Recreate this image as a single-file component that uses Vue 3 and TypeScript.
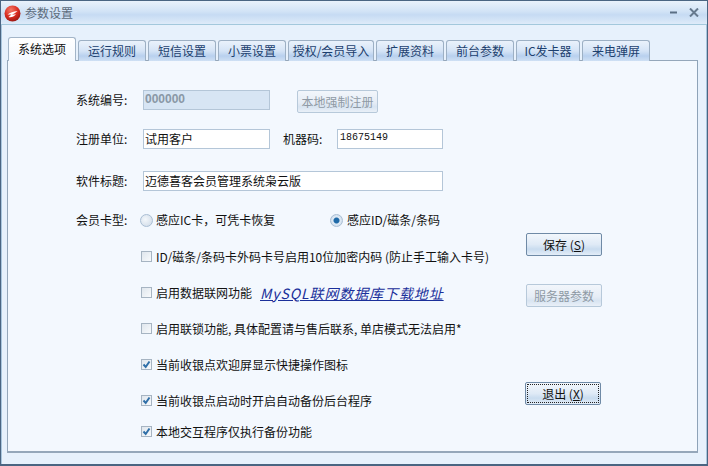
<script setup lang="ts">
const tabs = ['运行规则', '短信设置', '小票设置', '授权/会员导入', '扩展资料', '前台参数', 'IC发卡器', '来电弹屏']
const checks = [
  { text: 'ID/磁条/条码卡外码卡号启用10位加密内码 (防止手工输入卡号)', on: false, gap: 25 },
  { text: '启用数据联网功能', on: false, gap: 25, link: true },
  { text: '启用联锁功能, 具体配置请与售后联系, 单店模式无法启用*', on: false, gap: 25 },
  { text: '当前收银点欢迎屏显示快捷操作图标', on: true, gap: 25 },
  { text: '当前收银点启动时开启自动备份后台程序', on: true, gap: 20 },
  { text: '本地交互程序仅执行备份功能', on: true, gap: 0 },
]
</script>

<template>
  <div class="win">
    <header class="title">
      <svg class="logo" width="17" height="17" viewBox="0 0 17 17">
        <defs>
          <radialGradient id="ball" cx="40%" cy="28%" r="80%">
            <stop offset="0" stop-color="#f47a68" />
            <stop offset="0.55" stop-color="#d92b20" />
            <stop offset="1" stop-color="#8e1410" />
          </radialGradient>
        </defs>
        <circle cx="8.5" cy="8.5" r="8" fill="url(#ball)" />
        <path d="M3.5 9.5 C6 7.5 9 6.5 13.5 6 C11.5 7.8 9.5 9 8 9.8 L12 9.3 C10 11.8 7 12.6 4.5 12 C5.5 11 6.5 10.4 7.5 9.6 Z" fill="#fff" />
      </svg>
      <span class="title-text">参数设置</span>
      <span class="spacer"></span>
      <svg width="7" height="3" viewBox="0 0 7 3" class="min"><rect width="7" height="2" y="0.5" fill="#5a6f85" /></svg>
      <svg width="10" height="9" viewBox="0 0 10 9" class="close"><path d="M1 0.5 L9 8.5 M9 0.5 L1 8.5" stroke="#66798e" stroke-width="2" fill="none" /></svg>
    </header>

    <div class="body">
      <nav class="tabs">
        <div class="tab active">系统选项</div>
        <div v-for="t in tabs" :key="t" class="tab">{{ t }}</div>
      </nav>

      <section class="panel">
        <div class="form">
          <div class="row r1">
            <label class="lab">系统编号:</label>
            <div class="input w127 disabled"><b>000000</b></div>
            <button class="btn off reg">本地强制注册</button>
          </div>
          <div class="row r2">
            <label class="lab">注册单位:</label>
            <div class="input w127">试用客户</div>
            <label class="lab2">机器码:</label>
            <div class="input w106 mono">18675149</div>
          </div>
          <div class="row r3">
            <label class="lab">软件标题:</label>
            <div class="input w300">迈德喜客会员管理系统枭云版</div>
          </div>
          <div class="row r4">
            <label class="lab">会员卡型:</label>
            <span class="radio"></span>
            <span class="opt1">感应IC卡，可凭卡恢复</span>
            <span class="radio on"></span>
            <span class="opt2">感应ID/磁条/条码</span>
          </div>
          <div class="checks">
            <div v-for="c in checks" :key="c.text" class="check" :style="{ marginBottom: c.gap + 'px' }">
              <span class="box">
                <svg v-if="c.on" width="9" height="9" viewBox="0 0 9 9"><path d="M1.5 4.5 L3.7 7 L7.5 1.5" stroke="#2f6fa8" stroke-width="2" fill="none" /></svg>
              </span>
              <span>{{ c.text }}</span>
              <a v-if="c.link" class="link">MySQL联网数据库下载地址</a>
            </div>
          </div>
        </div>
        <aside class="side">
          <button class="btn save">保存 (<u>S</u>)</button>
          <button class="btn off server">服务器参数</button>
          <button class="btn exit"><span class="focus">退出 (<u>X</u>)</span></button>
        </aside>
      </section>
    </div>
  </div>
</template>

<style>
html, body { margin: 0; background: #e6f0fb; }
</style>

<style scoped>
.win {
  width: 708px;
  height: 466px;
  box-sizing: border-box;
  border: 1px solid #4a6582;
  border-bottom-width: 2px;
  display: flex;
  flex-direction: column;
  background: #e7f1fc;
  font: 12px/16px "Noto Sans CJK SC", sans-serif;
  color: #111;
  overflow: hidden;
}
.title {
  height: 23px;
  flex: none;
  display: flex;
  align-items: center;
  padding: 0 8px 0 3px;
  background: linear-gradient(#e9f2fb 0%, #d2e3f6 45%, #c6dbf3 60%, #deebf9 100%);
  border-bottom: 1px solid #a3c8dc;
}
.logo { margin-top: 1px; }
.title-text { margin-left: 4px; color: #5c6b7b; }
.spacer { flex: 1; }
.min { margin-right: 12px; }
.body {
  flex: 1;
  padding: 12px 8px 11px 5px;
  display: flex;
  flex-direction: column;
  border-left: 1px solid #a9c6de;
  border-right: 1px solid #a9c6de;
}
.tabs {
  display: flex;
  align-items: flex-end;
  height: 24px;
  gap: 2px;
  padding-left: 1px;
  position: relative;
  z-index: 1;
  margin-bottom: -1px;
}
.tab {
  box-sizing: border-box;
  width: 68px;
  height: 21px;
  text-align: center;
  white-space: nowrap;
  border: 1px solid #9db0c4;
  border-bottom: none;
  border-radius: 3px 3px 0 0;
  color: #1c3f6e;
  line-height: 20px;
  background: linear-gradient(#eaf2fb 0%, #d5e4f6 50%, #b8d0ee 75%, #cfe0f4 100%);
}
.tab:nth-child(5) { width: 86px; }
.tab:nth-child(8) { width: 64px; }
.tab.active {
  height: 24px;
  color: #111;
  line-height: 21px;
  background: linear-gradient(#ffffff, #f3f8fe);
  border-color: #a3b5c8;
}
.panel {
  flex: 1;
  display: flex;
  background: #f3f8fe;
  border: 1px solid #95a7ba;
  border-bottom-width: 2px;
  border-right-color: #8ea3b8;
}
.form { width: 516px; padding: 29px 0 0 68px; box-sizing: border-box; }
.row { display: flex; align-items: center; }
.r1 { height: 20px; }
.r2 { height: 20px; margin-top: 19px; }
.r3 { height: 20px; margin-top: 22px; }
.r4 { height: 20px; margin-top: 19px; }
.lab { width: 67px; flex: none; }
.lab2 { margin-left: 13px; width: 54px; flex: none; }
.input {
  box-sizing: border-box;
  height: 20px;
  padding-left: 1px;
  border: 1px solid #b4c6d8;
  background: #fff;
  line-height: 17px;
  white-space: nowrap;
}
.w127 { width: 127px; }
.w106 { width: 106px; }
.w300 { width: 300px; }
.disabled { background: #d7e5f4; color: #8a98a6; font-family: "Liberation Sans", sans-serif; }
.mono { font: 10px/16px "Liberation Mono", monospace; padding-left: 2px; }
.radio {
  flex: none;
  box-sizing: border-box;
  width: 13px;
  height: 13px;
  margin-left: -3px;
  border-radius: 50%;
  border: 1px solid #a9bed4;
  background: radial-gradient(circle at 40% 40%, #f3f7fb, #cdd9e6);
}
.radio.on {
  margin-left: 0;
  background: radial-gradient(circle, #1f6aa8 0 2.5px, #e0ebf6 3.5px, #c3d3e4 100%);
}
.opt1 { margin-left: 3px; width: 174px; flex: none; }
.opt2 { margin-left: 4px; white-space: nowrap; }
.checks { margin-top: 21px; padding-left: 65px; }
.check { display: flex; align-items: center; height: 11px; white-space: nowrap; }
.box {
  flex: none;
  box-sizing: border-box;
  width: 11px;
  height: 11px;
  margin-right: 4px;
  border: 1px solid #a6b4c2;
  background: linear-gradient(135deg, #dfe6ed, #f8fafc);
  display: flex;
  align-items: center;
  justify-content: center;
}
.link {
  margin-left: 8px;
  font-size: 14px;
  font-style: italic;
  letter-spacing: 0.9px;
  text-decoration: underline;
  color: #1a2f9a;
}
.side {
  flex: 1;
  display: flex;
  flex-direction: column;
  align-items: flex-start;
  padding-left: 2px;
}
.btn {
  box-sizing: border-box;
  width: 76px;
  height: 23px;
  padding: 0;
  border: 1px solid #6f8aa6;
  border-radius: 2px;
  font: inherit;
  color: #111;
  background: linear-gradient(#f2f7fc 0%, #dfeaf6 50%, #c9dcef 72%, #e3edf8 100%);
}
.btn.off {
  border-color: #b7c9da;
  color: #8f9aa5;
  background: linear-gradient(#f2f6fb 0%, #e6edf6 55%, #d8e4f1 75%, #e9f0f8 100%);
}
.reg { width: 81px; margin-left: 27px; align-self: flex-start; }
.save { margin-top: 172px; }
.server { margin-top: 28px; }
.exit { margin-top: 75px; margin-left: -1px; padding: 1px; }
.focus {
  display: block;
  height: 19px;
  line-height: 17px;
  border: 1px dotted #222;
  box-sizing: border-box;
}
</style>
